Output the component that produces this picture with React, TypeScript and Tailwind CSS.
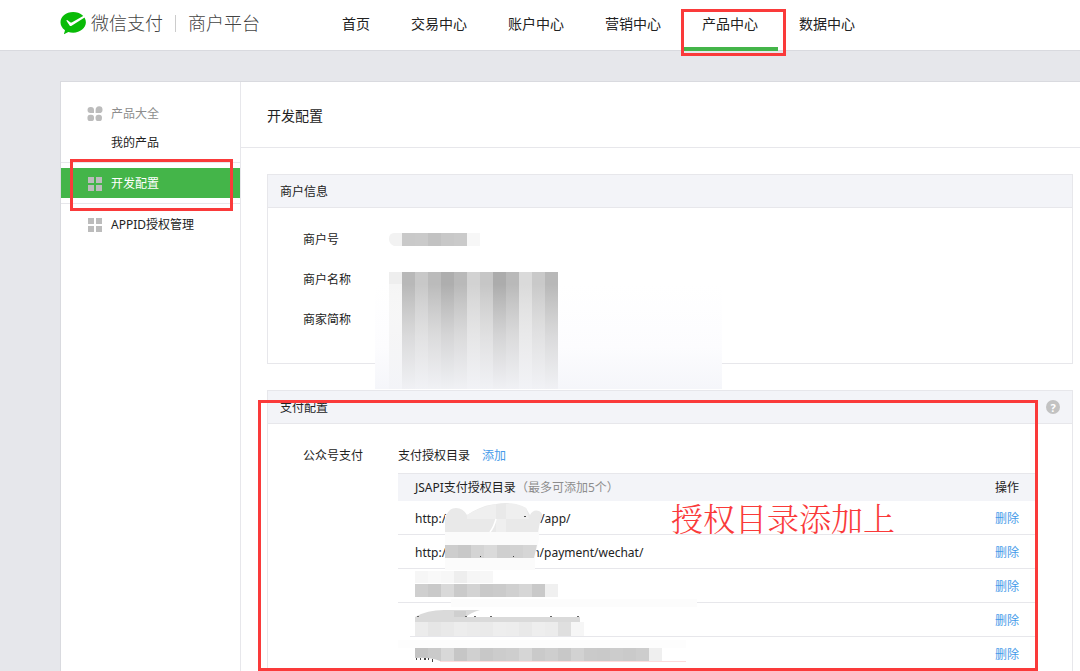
import { useState, type ReactNode } from 'react';

const NAV = ['首页', '交易中心', '账户中心', '营销中心', '产品中心', '数据中心'];

const HEAD = ['#eeeeee', '#b8b8b8', '#c8c8c8', '#bbbbbb', '#aeaeae', '#b9b9b9', '#d2d2d2', '#c6c6c6', '#acacac', '#b9b9b9', '#dadada', '#c9c9c9', '#b8b8b8'];
const ROW2 = ['#cdcdcd', '#c8c8c8', '#d4d4d4', '#dadada', '#cfcfcf', '#d2d2d2'];
const ROW3 = ['#cfcfcf', '#c9c9c9', '#d9d9d9', '#cacaca', '#d3d3d3', '#c9c9c9', '#cbcbcb', '#d0d0d0', '#d6d6d6', '#c9c9c9', '#f0f0f0'];
const ROW4 = ['#ececec', '#e6e6e6', '#e9e9e9', '#ededed', '#ebebeb', '#eaeaea', '#eeeeee', '#ededed', '#e9e9e9', '#eeeeee', '#ececec', '#dfdfdf', '#f6f6f6'];
const ROW5 = ['#c4c4c4', '#cacaca', '#d8d8d8', '#c6c6c6', '#d0d0d0', '#c8c8c8', '#cccccc', '#cecece', '#d6d6d6', '#cacaca', '#cecece', '#c8c8c8', '#d2d2d2', '#cacaca', '#c9c9c9', '#cccccc', '#cacaca', '#cdcdcd', '#efefef'];

function Blocks({ x, y, h, fills, w = 13 }: { x: number; y: number; h: number; fills: string[]; w?: number }) {
  return (
    <g shapeRendering="crispEdges">
      {fills.map((fill, i) => (
        <rect key={i} x={x + i * w} y={y} width={w} height={h} fill={fill} />
      ))}
    </g>
  );
}

function Mark({ className }: { className: string }) {
  return <span aria-hidden="true" className={`pointer-events-none absolute z-10 border-[3px] border-[#fa3a3a] ${className}`} />;
}

function GridIcon({ petals = false }: { petals?: boolean }) {
  return (
    <svg viewBox="0 0 16 16" className="size-4 shrink-0" fill="#bcbcbc" aria-hidden="true">
      {petals ? (
        <>
          <path d="M4 1a3 3 0 0 1 3 3v3H3.500a3 3 0 0 1 0-6z" />
          <path d="M12.200.300a3.300 3.300 0 0 1 0 6.700H8.600V4A3.500 3.500 0 0 1 12.200.3z" />
          <rect x="0.500" y="8.700" width="6.500" height="6.300" rx="2.600" />
          <rect x="8.600" y="8.700" width="6.300" height="6.300" rx="2.600" />
        </>
      ) : (
        <>
          <rect x="1" y="1" width="6" height="6" />
          <rect x="9" y="1" width="6" height="6" />
          <rect x="1" y="9" width="6" height="6" />
          <rect x="9" y="9" width="6" height="6" />
        </>
      )}
    </svg>
  );
}

function Logo() {
  return (
    <svg viewBox="0 0 26 24" className="h-6 w-[26px] shrink-0" aria-hidden="true">
      <path
        fill="#09bb07"
        d="M13.200.900C6 .9.500 5.400.500 11.300c0 3.100 1.600 5.800 4.200 7.700.2.200.3.400.2.700l-.9 3c-.1.300.2.600.5.400l3.800-2.200c1.500.5 3.200.8 4.900.8 7 0 12.700-4.700 12.700-10.400S20.200.9 13.200.9z"
      />
      <path fill="#fff" d="M25 6.300 11.200 14.900c-.7.400-1.300.2-1.600-.4L6.600 9.900c-.3-.7.300-1.100.9-.7l2.700 2.100c.5.300 1 .3 1.500.1L23.600 4.800z" />
    </svg>
  );
}

function Panel({ title, extra, className = '', children }: { title: string; extra?: ReactNode; className?: string; children: ReactNode }) {
  return (
    <section className={`relative border-x border-t border-[#e7e7eb] ${className}`}>
      <header className="flex h-[33px] items-center justify-between border-b border-[#e7e7eb] bg-[#f3f4f8] px-3">
        <h2 className="pt-0.5">{title}</h2>
        {extra}
      </header>
      {children}
    </section>
  );
}

function MerchantMask() {
  return (
    <svg viewBox="0 0 352 170" className="absolute left-[102px] top-[45px] h-[170px] w-[352px]" aria-hidden="true">
      <defs>
        <linearGradient id="fade" x1="0" y1="0" x2="0" y2="1">
          <stop offset="0" stopColor="#fff" stopOpacity="0" />
          <stop offset="0.5" stopColor="#f6f6f8" stopOpacity="0.55" />
          <stop offset="1" stopColor="#f3f4f8" stopOpacity="0.95" />
        </linearGradient>
        <linearGradient id="haze" x1="0" y1="0" x2="0" y2="1">
          <stop offset="0" stopColor="#fff" stopOpacity="0.9" />
          <stop offset="0.6" stopColor="#fcfcfe" />
          <stop offset="1" stopColor="#f5f6fa" />
        </linearGradient>
      </defs>
      <path d="M32 13V26H24Q19 24 19 19Q19 13 24 13z" fill="#f2f2f2" />
      <Blocks x={32} y={13} h={13} fills={['#c9c9c9', '#cacaca', '#c2c2c2', '#c8c8c8', '#cacaca', '#f7f7f7']} />
      <rect x="5" y="65" width="347" height="104" fill="url(#haze)" />
      <Blocks x={19} y={64} h={105} fills={['#f5f5f5', ...HEAD.slice(1)]} />
      <rect x="19" y="64" width="169" height="105" fill="url(#fade)" />
      <Blocks x={19} y={52} h={12} fills={HEAD} />
    </svg>
  );
}

function DirectoryMask() {
  return (
    <svg viewBox="0 0 300 198" className="pointer-events-none absolute left-0 top-0 h-[198px] w-[300px]" aria-hidden="true">
      <path d="M47 42H141V66L137 85V97H47z" fill="#fbfbfb" />
      <path d="M47 59V48Q49 35 58 35Q65 35 69 42Q84 32 98 31Q114 28 128 35L132 42Q135 36 141 38Q147 41 142 49L140 59z" fill="#e9e9e9" />
      <path d="M69 42Q84 33 98 31V59H108V31Q118 29 128 35L131 46H69z" fill="#efefef" />
      <path d="M92 59Q96 54 98 46" fill="none" stroke="#fff" strokeWidth="1.500" />
      <path d="M47 72H139L136 85H47z" fill="#d6d6d6" />
      <Blocks x={47} y={72} h={13} fills={ROW2} />
      <g fill="#fbfbfb">
        <rect x="47" y="85" width="89" height="4" />
      </g>
      <g fill="#444">
        <rect x="82" y="83" width="1" height="1" />
        <rect x="115" y="83" width="1" height="1" />
        <rect x="126" y="43" width="2" height="1" />
      </g>

      <Blocks x={17} y={98} h={12} fills={['#f6f6f6', '#f9f9f9', '#f7f7f7', '#eeeeee', '#f6f6f6', '#f7f7f7']} />
      <Blocks x={17} y={111} h={13} fills={ROW3} />
      <rect x="53" y="126" width="246" height="8" fill="#fcfcfc" />

      <path d="M17 149V144Q29 137 46 137H82Q72 140 68 144H182V149z" fill="#dadada" />
      <Blocks x={56} y={138} h={6} fills={['#cfcfcf']} w={12} />
      <Blocks x={17} y={149} h={14} fills={ROW4} />
      <g fill="#666">
        <rect x="19" y="143" width="2" height="1" />
        <rect x="67" y="143" width="2" height="1" />
        <rect x="76" y="143" width="2" height="1" />
        <rect x="92" y="143" width="2" height="1" />
        <rect x="152" y="143" width="2" height="1" />
        <rect x="179" y="143" width="2" height="1" />
      </g>
      <rect x="0" y="161" width="12" height="4" fill="#fff" />

      <rect x="0" y="167" width="288" height="8" fill="#fdfdfd" />
      <Blocks x={17} y={175} h={13} fills={ROW5} />
      <path d="M17 188V185Q32 184 42 188z" fill="#fff" />
      <g fill="#444">
        <rect x="18" y="185" width="1" height="2" />
        <rect x="22" y="185" width="1" height="2" />
        <rect x="26" y="185" width="2" height="2" />
        <rect x="30" y="185" width="1" height="2" />
        <rect x="34" y="186" width="1" height="3" />
      </g>
      <rect x="42" y="188" width="246" height="1" fill="#fbdcdc" />
    </svg>
  );
}

const ROWS: { start: string; gap: string; end: string }[] = [
  { start: 'http:/', gap: 'w-[94px]', end: '/app/' },
  { start: 'http:/', gap: 'w-[86px]', end: 'n/payment/wechat/' },
  { start: '', gap: '', end: '' },
  { start: '', gap: '', end: '' },
  { start: '', gap: '', end: '' },
];

export default function App() {
  const [active, setActive] = useState('产品中心');

  return (
    <div className="flex min-h-screen flex-col overflow-x-hidden bg-[#e6e7eb] font-['Noto_Sans','Noto_Sans_CJK_SC',sans-serif] text-xs text-[#222]">
      <header className="flex h-[51px] border-b border-[#d9dadf] bg-white pl-[60px]">
        <a href="#" className="flex h-[46px] w-[262px] shrink-0 items-center text-[#444]">
          <Logo />
          <span className="ml-[5px] text-[18px] font-light">微信支付</span>
          <span className="mx-3 h-[17px] w-px bg-[#ccc]" />
          <span className="text-[18px] font-light">商户平台</span>
        </a>
        <nav className="flex gap-px text-sm">
          {NAV.map((item) => (
            <a
              key={item}
              href="#"
              onClick={() => setActive(item)}
              className={`relative flex h-[51px] shrink-0 items-center border-b-4 px-5 pt-px ${item === active ? 'border-[#44b549]' : 'border-transparent'}`}
            >
              {item}
              {item === '产品中心' && <Mark className="-left-px -right-2 -bottom-[9px] top-[9px]" />}
            </a>
          ))}
        </nav>
      </header>

      <div className="mt-[30px] ml-[60px] flex flex-1 border-l border-t border-[#d9dadf] bg-white">
        <aside className="w-[180px] shrink-0 border-r border-[#e7e7eb] pt-[17px]">
          <div className="flex h-[30px] items-center gap-2 pl-[26px] text-[#8d8d8d]">
            <GridIcon petals />
            产品大全
          </div>
          <a href="#" className="flex h-7 items-center pl-[50px]">我的产品</a>
          <div className="relative mt-[5px] border-y border-[#e7e7eb] py-[5px]">
            <a href="#" className="flex h-[30px] items-center gap-2 bg-[#44b549] pt-0.5 pl-[26px] text-white">
              <GridIcon />
              开发配置
            </a>
            <Mark className="-bottom-2 left-[9px] right-[7px] -top-[4px]" />
          </div>
          <a href="#" className="mt-1.5 flex h-[30px] items-center gap-2 pl-[26px]">
            <GridIcon />
            APPID授权管理
          </a>
        </aside>

        <main className="min-w-0 flex-1">
          <h1 className="flex h-[66px] items-center border-b border-[#e7e7eb] pt-0.5 pl-[26px] text-sm">开发配置</h1>
          <div className="pt-[26px] pl-[26px] pr-[7px]">
            <Panel title="商户信息" className="border-b">
              <dl className="px-[35px] pt-3 pb-[23px]">
                {['商户号', '商户名称', '商家简称'].map((label) => (
                  <div key={label} className="flex h-10 items-center">
                    <dt>{label}</dt>
                    <dd />
                  </div>
                ))}
              </dl>
              <MerchantMask />
            </Panel>

            <Panel
              title="支付配置"
              className="mt-[26px]"
              extra={
                <button type="button" aria-label="帮助" className="flex size-[14px] items-center justify-center rounded-full bg-[#c2c2c2] text-[11px] font-bold leading-none text-white">
                  ?
                </button>
              }
            >
              <div className="flex pt-5 pl-[35px] pr-9">
                <div className="flex h-6 w-[95px] shrink-0 items-center">公众号支付</div>
                <div className="min-w-0 flex-1">
                  <div className="mb-[5px] flex h-6 items-center gap-3">
                    <span>支付授权目录</span>
                    <button type="button" className="text-[#459ae9]">添加</button>
                  </div>
                  <div className="relative">
                    <table className="w-full border-separate border-spacing-0 text-left">
                      <thead className="bg-[#f3f4f8]">
                        <tr>
                          <th className="h-7 border-t border-[#e7e7eb] pt-px pl-[17px] font-normal">
                            JSAPI支付授权目录<span className="text-[#8d8d8d]">（最多可添加5个）</span>
                          </th>
                          <th className="h-7 border-t border-[#e7e7eb] pt-px pr-[17px] text-right font-normal">操作</th>
                        </tr>
                      </thead>
                      <tbody>
                        {ROWS.map((row, i) => (
                          <tr key={i}>
                            <td className="h-[34px] border-b border-[#e7e7eb] pt-0.5 pl-[17px]">
                              <span className="flex items-center">
                                {row.start}
                                <span className={`inline-block ${row.gap}`} />
                                {row.end}
                              </span>
                            </td>
                            <td className="h-[34px] border-b border-[#e7e7eb] pt-0.5 pr-[17px] text-right">
                              <button type="button" className="text-[#459ae9]">删除</button>
                            </td>
                          </tr>
                        ))}
                      </tbody>
                    </table>
                    <DirectoryMask />
                    <p className="pointer-events-none absolute left-[273px] top-6 font-['Noto_Serif_CJK_SC','AR_PL_UMing_CN','Noto_Sans_CJK_SC',serif] text-[32px] font-light leading-10 text-[#fa3a3a]">
                      授权目录添加上
                    </p>
                  </div>
                </div>
              </div>
              <Mark className="-left-[10px] bottom-0 right-[34px] top-[9px]" />
            </Panel>
          </div>
        </main>
      </div>
    </div>
  );
}
